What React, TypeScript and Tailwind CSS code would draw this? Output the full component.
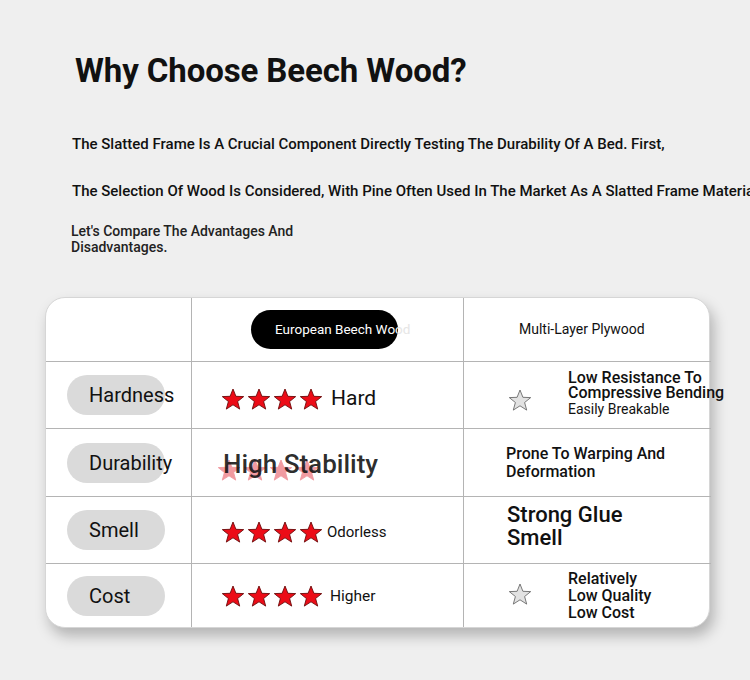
const font = { fontFamily: 'Roboto, "Noto Sans", Arial, sans-serif' };

function Star({ filled = true, faded = false }: { filled?: boolean; faded?: boolean }) {
  const fill = faded ? '#f19aa0' : filled ? '#ec0c17' : '#e2e2e2';
  const stroke = faded ? '#f19aa0' : filled ? '#6b0a0a' : '#6b6b6b';
  return (
    <svg width="24" height="23" viewBox="0 0 24 23" className="shrink-0">
      <polygon
        points="12,1 14.9,8.3 22.7,8.6 16.6,13.5 18.7,21.1 12,16.8 5.3,21.1 7.4,13.5 1.3,8.6 9.1,8.3"
        fill={fill}
        stroke={stroke}
        strokeWidth="0.9"
        strokeLinejoin="round"
      />
    </svg>
  );
}

function FourStars({ faded = false }: { faded?: boolean }) {
  return (
    <div className="flex gap-[2px]">
      <Star faded={faded} />
      <Star faded={faded} />
      <Star faded={faded} />
      <Star faded={faded} />
    </div>
  );
}

function Label({ text }: { text: string }) {
  return (
    <div className="flex h-full items-center pl-[21px]">
      <div className="flex h-[40px] w-[98px] items-center whitespace-nowrap rounded-full bg-[#dadada] pl-[22px] text-[20px] text-[#111]">
        {text}
      </div>
    </div>
  );
}

export default function App() {
  return (
    <div className="h-[680px] w-[750px] overflow-hidden bg-[#efefef] text-[#111]" style={font}>
      <div className="pl-[75px] pt-[51px]">
        <h1 className="text-[33px] font-bold leading-[40px] tracking-[-0.1px] text-[#111]">
          Why Choose Beech Wood?
        </h1>
      </div>
      <p className="mt-[43px] whitespace-nowrap pl-[72px] text-[15px] font-medium leading-[20px]">
        The Slatted Frame Is A Crucial Component Directly Testing The Durability Of A Bed. First,
      </p>
      <p className="mt-[27px] whitespace-nowrap pl-[72px] text-[15px] font-medium leading-[20px]">
        The Selection Of Wood Is Considered, With Pine Often Used In The Market As A Slatted Frame Material
      </p>
      <p className="ml-[71px] mt-[22px] w-[240px] text-[14px] font-medium leading-[16px] text-[#222]">
        Let's Compare The Advantages And Disadvantages.
      </p>

      <div className="ml-[45px] mt-[42px] w-[665px] rounded-[20px] border border-[#d6d6d6] bg-white shadow-[4px_8px_14px_rgba(0,0,0,0.25)]">
        <div className="grid grid-cols-[146px_272px_247px] grid-rows-[63px_67px_68px_67px_64px]">
          {/* header */}
          <div className="border-r border-[#b4b4b4]" />
          <div className="flex items-center border-r border-[#b4b4b4] pl-[59px]">
            <div className="relative h-[39px] w-[147px]">
              <span className="absolute left-[24px] top-[11px] whitespace-nowrap text-[13.5px] leading-[17px] text-[#e6e6e6]">
                European Beech Wood
              </span>
              <div className="absolute inset-0 overflow-hidden rounded-full bg-black">
                <span className="absolute left-[24px] top-[11px] whitespace-nowrap text-[13.5px] leading-[17px] text-white">
                  European Beech Wood
                </span>
              </div>
            </div>
          </div>
          <div className="flex items-center pl-[55px] text-[14px]">Multi-Layer Plywood</div>

          {/* hardness */}
          <div className="border-r border-t border-[#b4b4b4]">
            <Label text="Hardness" />
          </div>
          <div className="flex items-center gap-[8px] border-r border-t border-[#b4b4b4] pl-[29px] pt-[8px]">
            <FourStars />
            <span className="text-[21px]">Hard</span>
          </div>
          <div className="flex items-center border-t border-[#b4b4b4] pl-[44px]">
            <div className="pt-[10px]">
              <Star filled={false} />
            </div>
            <div className="ml-[36px] whitespace-nowrap pb-[4px]">
              <div className="text-[16px] font-medium leading-[15px]">Low Resistance To</div>
              <div className="text-[16px] font-medium leading-[15px]">Compressive Bending</div>
              <div className="mt-[1px] text-[14px] leading-[16px]">Easily Breakable</div>
            </div>
          </div>

          {/* durability */}
          <div className="border-r border-t border-[#b4b4b4]">
            <Label text="Durability" />
          </div>
          <div className="flex items-center border-r border-t border-[#b4b4b4] pl-[31px] pt-[4px]">
            <div className="relative">
              <div className="absolute left-[-6px] top-[14px]">
                <FourStars faded />
              </div>
              <span className="relative text-[26px] font-medium text-[#111]/90">High Stability</span>
            </div>
          </div>
          <div className="flex items-center border-t border-[#b4b4b4] pl-[42px]">
            <div className="text-[16px] font-medium leading-[18px]">
              Prone To Warping And
              <br />
              Deformation
            </div>
          </div>

          {/* smell */}
          <div className="border-r border-t border-[#b4b4b4]">
            <Label text="Smell" />
          </div>
          <div className="flex items-center gap-[4px] border-r border-t border-[#b4b4b4] pl-[29px] pt-[4px]">
            <FourStars />
            <span className="text-[15px]">Odorless</span>
          </div>
          <div className="flex items-start border-t border-[#b4b4b4] pl-[43px] pt-[6px]">
            <div className="text-[22px] font-medium leading-[23px]">
              Strong Glue
              <br />
              Smell
            </div>
          </div>

          {/* cost */}
          <div className="border-r border-t border-[#b4b4b4]">
            <Label text="Cost" />
          </div>
          <div className="flex items-center gap-[7px] border-r border-t border-[#b4b4b4] pl-[29px] pt-[2px]">
            <FourStars />
            <span className="text-[15.5px]">Higher</span>
          </div>
          <div className="flex items-center border-t border-[#b4b4b4] pl-[44px]">
            <div className="pb-[2px]">
              <Star filled={false} />
            </div>
            <div className="ml-[36px] text-[16px] font-medium leading-[17px]">
              Relatively
              <br />
              Low Quality
              <br />
              Low Cost
            </div>
          </div>
        </div>
      </div>
    </div>
  );
}
